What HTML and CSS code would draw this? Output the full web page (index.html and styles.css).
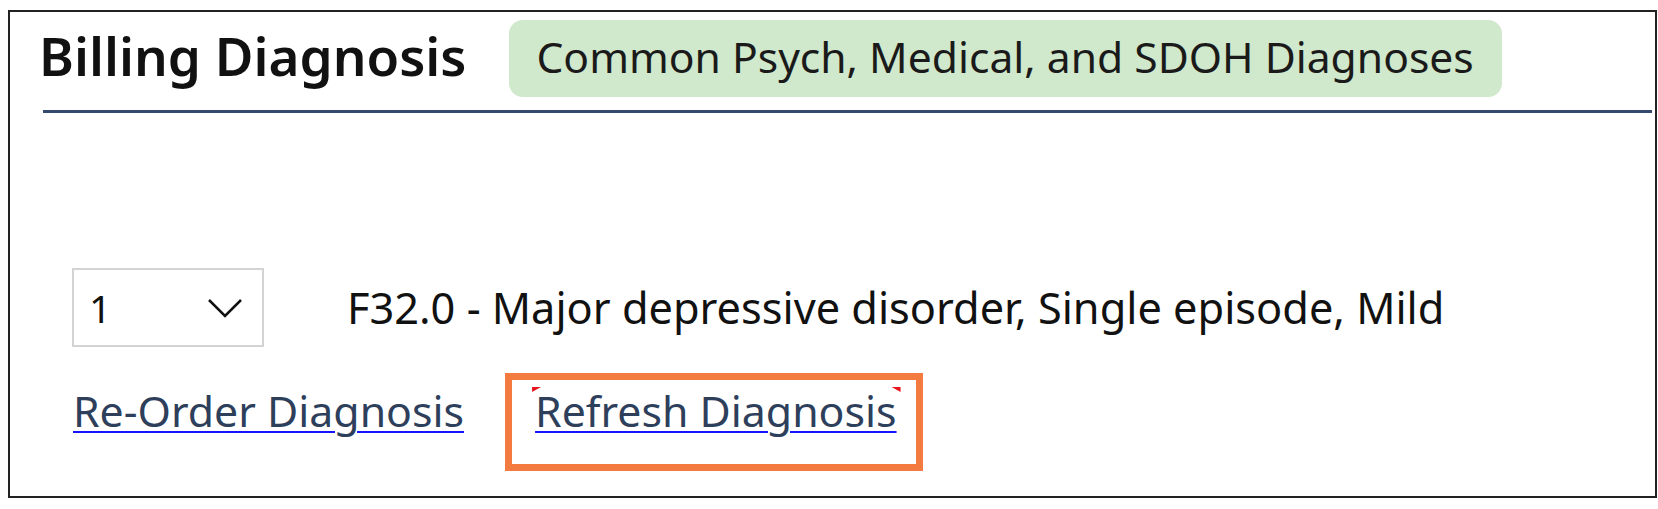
FILE: index.html
```html
<!DOCTYPE html>
<html lang="en">
<head>
  <meta charset="UTF-8" />
  <title>Billing Diagnosis</title>
  <link rel="stylesheet" href="styles.css">
</head>
<body>
  <div class="panel">
    <div class="panel-header">
      <h1 class="panel-title">Billing Diagnosis</h1>
      <span class="tag">Common Psych, Medical, and SDOH Diagnoses</span>
    </div>

    <div class="dx-row">
      <div class="rank-select">
        <span class="rank-value">1</span>
        <svg class="chevron" width="36" height="20" viewBox="0 0 36 20">
          <polyline points="2,2 18,18 34,2" fill="none" stroke="#111" stroke-width="2.5" />
        </svg>
      </div>
      <span class="dx-text">F32.0 - Major depressive disorder, Single episode, Mild</span>
    </div>

    <div class="dx-actions">
      <a href="#" class="dx-link">Re-Order Diagnosis</a>
      <span class="highlight">
        <a href="#" class="dx-link">Refresh Diagnosis</a>
      </span>
    </div>
  </div>
</body>
</html>
```
FILE: styles.css
```css
body {
  margin: 0;
  font-family: "Noto Sans", "Open Sans", sans-serif;
  background: #fff;
  color: #111;
}
.panel {
  box-sizing: border-box;
  margin: 10px 0 0 8px;
  width: 1649px;
  height: 488px;
  border: 2px solid #222;
  padding: 8px 3px 0 33px;
}
.panel-header {
  display: flex;
  align-items: center;
  padding-bottom: 13px;
  border-bottom: 3px solid #34496b;
}
.panel-title {
  margin: 0 43px 6px -4px;
  font-size: 53px;
  font-weight: 600;
  line-height: 71px;
  color: #111;
}
.tag {
  background: #d0e8cb;
  border-radius: 14px;
  padding: 0 28px 5px 27px;
  font-size: 42.6px;
  line-height: 72px;
  color: #1a1a1a;
}
.dx-row {
  display: flex;
  align-items: center;
  margin-top: 155px;
  padding-left: 29px;
}
.rank-select {
  box-sizing: border-box;
  width: 192px;
  height: 79px;
  border: 2px solid #d3d3d3;
  display: flex;
  align-items: center;
  justify-content: space-between;
  padding: 0 19px 0 15px;
}
.rank-value {
  font-size: 39px;
  line-height: 1;
}
.dx-text {
  margin-left: 83px;
  font-size: 43.3px;
  line-height: 60px;
  color: #111;
}
.dx-actions {
  display: flex;
  align-items: baseline;
  margin-top: 26px;
  padding-left: 30px;
}
.dx-link {
  font-size: 42.8px;
  line-height: 50px;
  color: #2e3f5c;
  text-decoration: underline;
  text-decoration-color: #1414ff;
  text-decoration-thickness: 2px;
  text-underline-offset: 4px;
}
.highlight {
  position: relative;
  margin-left: 41px;
  border: 7px solid #f47b3f;
  padding: 6px 19px 28px 23px;
}
/* little red focus corners */
.highlight::before,
.highlight::after {
  content: "";
  position: absolute;
  top: 7px;
  width: 9px;
  height: 5px;
  background: #e8141e;
}
.highlight::before {
  left: 20px;
  clip-path: polygon(0 0, 100% 0, 0 100%);
}
.highlight::after {
  right: 15px;
  clip-path: polygon(0 0, 100% 0, 100% 100%);
}
```
